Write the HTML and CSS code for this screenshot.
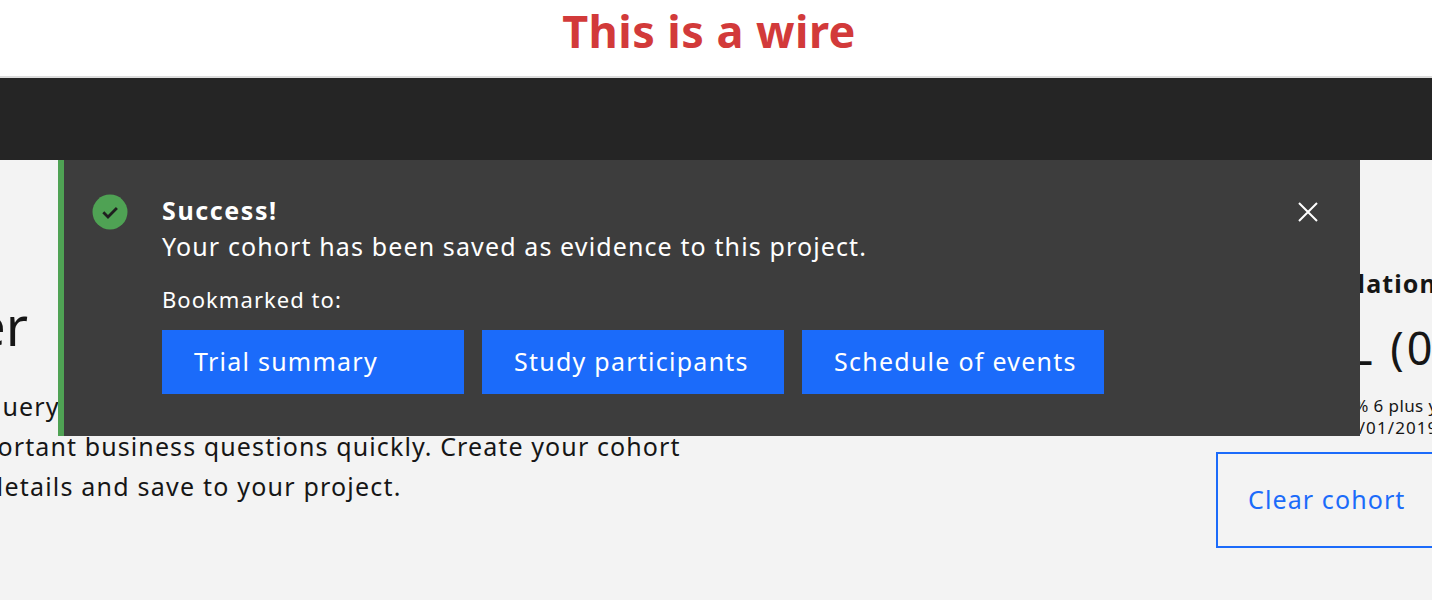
FILE: index.html
```html
<!DOCTYPE html>
<html lang="en">
<head>
<meta charset="utf-8">
<title>Cohort builder</title>
<link rel="stylesheet" href="styles.css">
</head>
<body>
<header class="wire-banner"><h2 class="wire-title">This is a wire</h2></header>
<div class="app-bar"></div>
<main class="content">
  <section class="intro">
    <h1 class="intro-title">Cohort builder</h1>
    <p class="intro-text">To query your data and answer<br>important business questions quickly. Create your cohort<br><span class="intro-last">its details and save to your project.</span></p>
  </section>
  <aside class="summary">
    <h3 class="summary-label">Population</h3>
    <div class="summary-value">L (0%)</div>
    <p class="summary-note">70% 6 plus years<br><span class="summary-date">12/01/2019</span></p>
    <button class="clear-btn">Clear cohort</button>
  </aside>
  <div class="toast">
    <svg class="toast-icon" viewBox="0 0 36 36" aria-hidden="true">
      <circle cx="18" cy="18" r="17.5" fill="#4fa254"/>
      <path d="M11.3 18.2l4.7 4.7 8.9-8.9" fill="none" stroke="#1f1f1f" stroke-width="2.8"/>
    </svg>
    <div class="toast-body">
      <div class="toast-title">Success!</div>
      <div class="toast-message">Your cohort has been saved as evidence to this project.</div>
      <div class="toast-sub">Bookmarked to:</div>
      <div class="toast-actions">
        <button class="action-btn">Trial summary</button>
        <button class="action-btn">Study participants</button>
        <button class="action-btn">Schedule of events</button>
      </div>
    </div>
    <svg class="toast-close" viewBox="0 0 20 20" aria-hidden="true">
      <path d="M1 1l18 18M19 1L1 19" fill="none" stroke="#fff" stroke-width="2"/>
    </svg>
  </div>
</main>
</body>
</html>
```
FILE: styles.css
```css
* { box-sizing: border-box; }
html, body { margin: 0; height: 100%; }
body {
  width: 1432px;
  height: 600px;
  overflow: hidden;
  background: #f3f3f3;
  font-family: "Noto Sans", "Open Sans", sans-serif;
  color: #161616;
}
.wire-banner {
  height: 78px;
  background: #fff;
  border-bottom: 2px solid #dcdcdc;
  padding-right: 14px;
  text-align: center;
}
.wire-title {
  margin: 0;
  font-size: 45px;
  line-height: 62px;
  font-weight: 700;
  letter-spacing: 0.45px;
  color: #d23a3a;
}
.app-bar { height: 82px; background: #252525; }
.content {
  position: relative;
  height: 440px;
  display: flex;
  justify-content: space-between;
  overflow: hidden;
}
.intro { margin-left: -51px; padding-top: 130px; width: 830px; flex: none; }
.intro-title { margin: 0 0 0 -290px; font-size: 54px; line-height: 70px; font-weight: 400; white-space: nowrap; }
.intro-text { margin: 26px 0 0; font-size: 25px; line-height: 40px; letter-spacing: 1.1px; white-space: nowrap; }
.intro-last { letter-spacing: 1.21px; }
.summary { width: 300px; flex: none; margin-right: -84px; padding-top: 106px; }
.summary-label { margin: 0; padding-left: 74px; font-size: 25px; line-height: 34px; font-weight: 700; letter-spacing: 1.1px; white-space: nowrap; }
.summary-value { margin-top: 20px; font-size: 45px; line-height: 56px; letter-spacing: 3px; white-space: nowrap; padding-left: 133px; }
.summary-note { margin: 19px 0 0; font-size: 17px; line-height: 22px; letter-spacing: 0.4px; white-space: nowrap; padding-left: 118px; }
.summary-date { margin-left: 3px; letter-spacing: 1.1px; }
.clear-btn {
  display: block;
  margin-top: 13px;
  width: 300px;
  height: 96px;
  padding: 0 30px 2px;
  text-align: left;
  background: transparent;
  border: 2px solid #1b6bfa;
  color: #1b6bfa;
  font: inherit;
  font-size: 25px;
  letter-spacing: 1.1px;
}
.toast {
  position: absolute;
  left: 58px;
  top: 0;
  width: 1302px;
  height: 276px;
  display: flex;
  align-items: flex-start;
  padding: 34px 42px 0 28px;
  background: #3d3d3d;
  border-left: 6px solid #4fa254;
  color: #fff;
}
.toast-icon { width: 36px; height: 36px; flex: none; margin-right: 34px; }
.toast-body { flex: 1; margin-top: -1px; }
.toast-title { font-size: 25px; line-height: 34px; font-weight: 700; letter-spacing: 1.6px; }
.toast-message { font-size: 25px; line-height: 38px; letter-spacing: 1.12px; }
.toast-sub { margin-top: 20px; font-size: 22px; line-height: 28px; letter-spacing: 1.05px; }
.toast-actions { display: flex; gap: 18px; margin-top: 17px; }
.action-btn {
  width: 302px;
  height: 64px;
  padding: 0 32px 2px;
  text-align: left;
  white-space: nowrap;
  border: 0;
  background: #1b6bfa;
  color: #fff;
  font: inherit;
  font-size: 25px;
  letter-spacing: 1.25px;
}
.toast-close { width: 20px; height: 20px; flex: none; margin-top: 8px; }
```
